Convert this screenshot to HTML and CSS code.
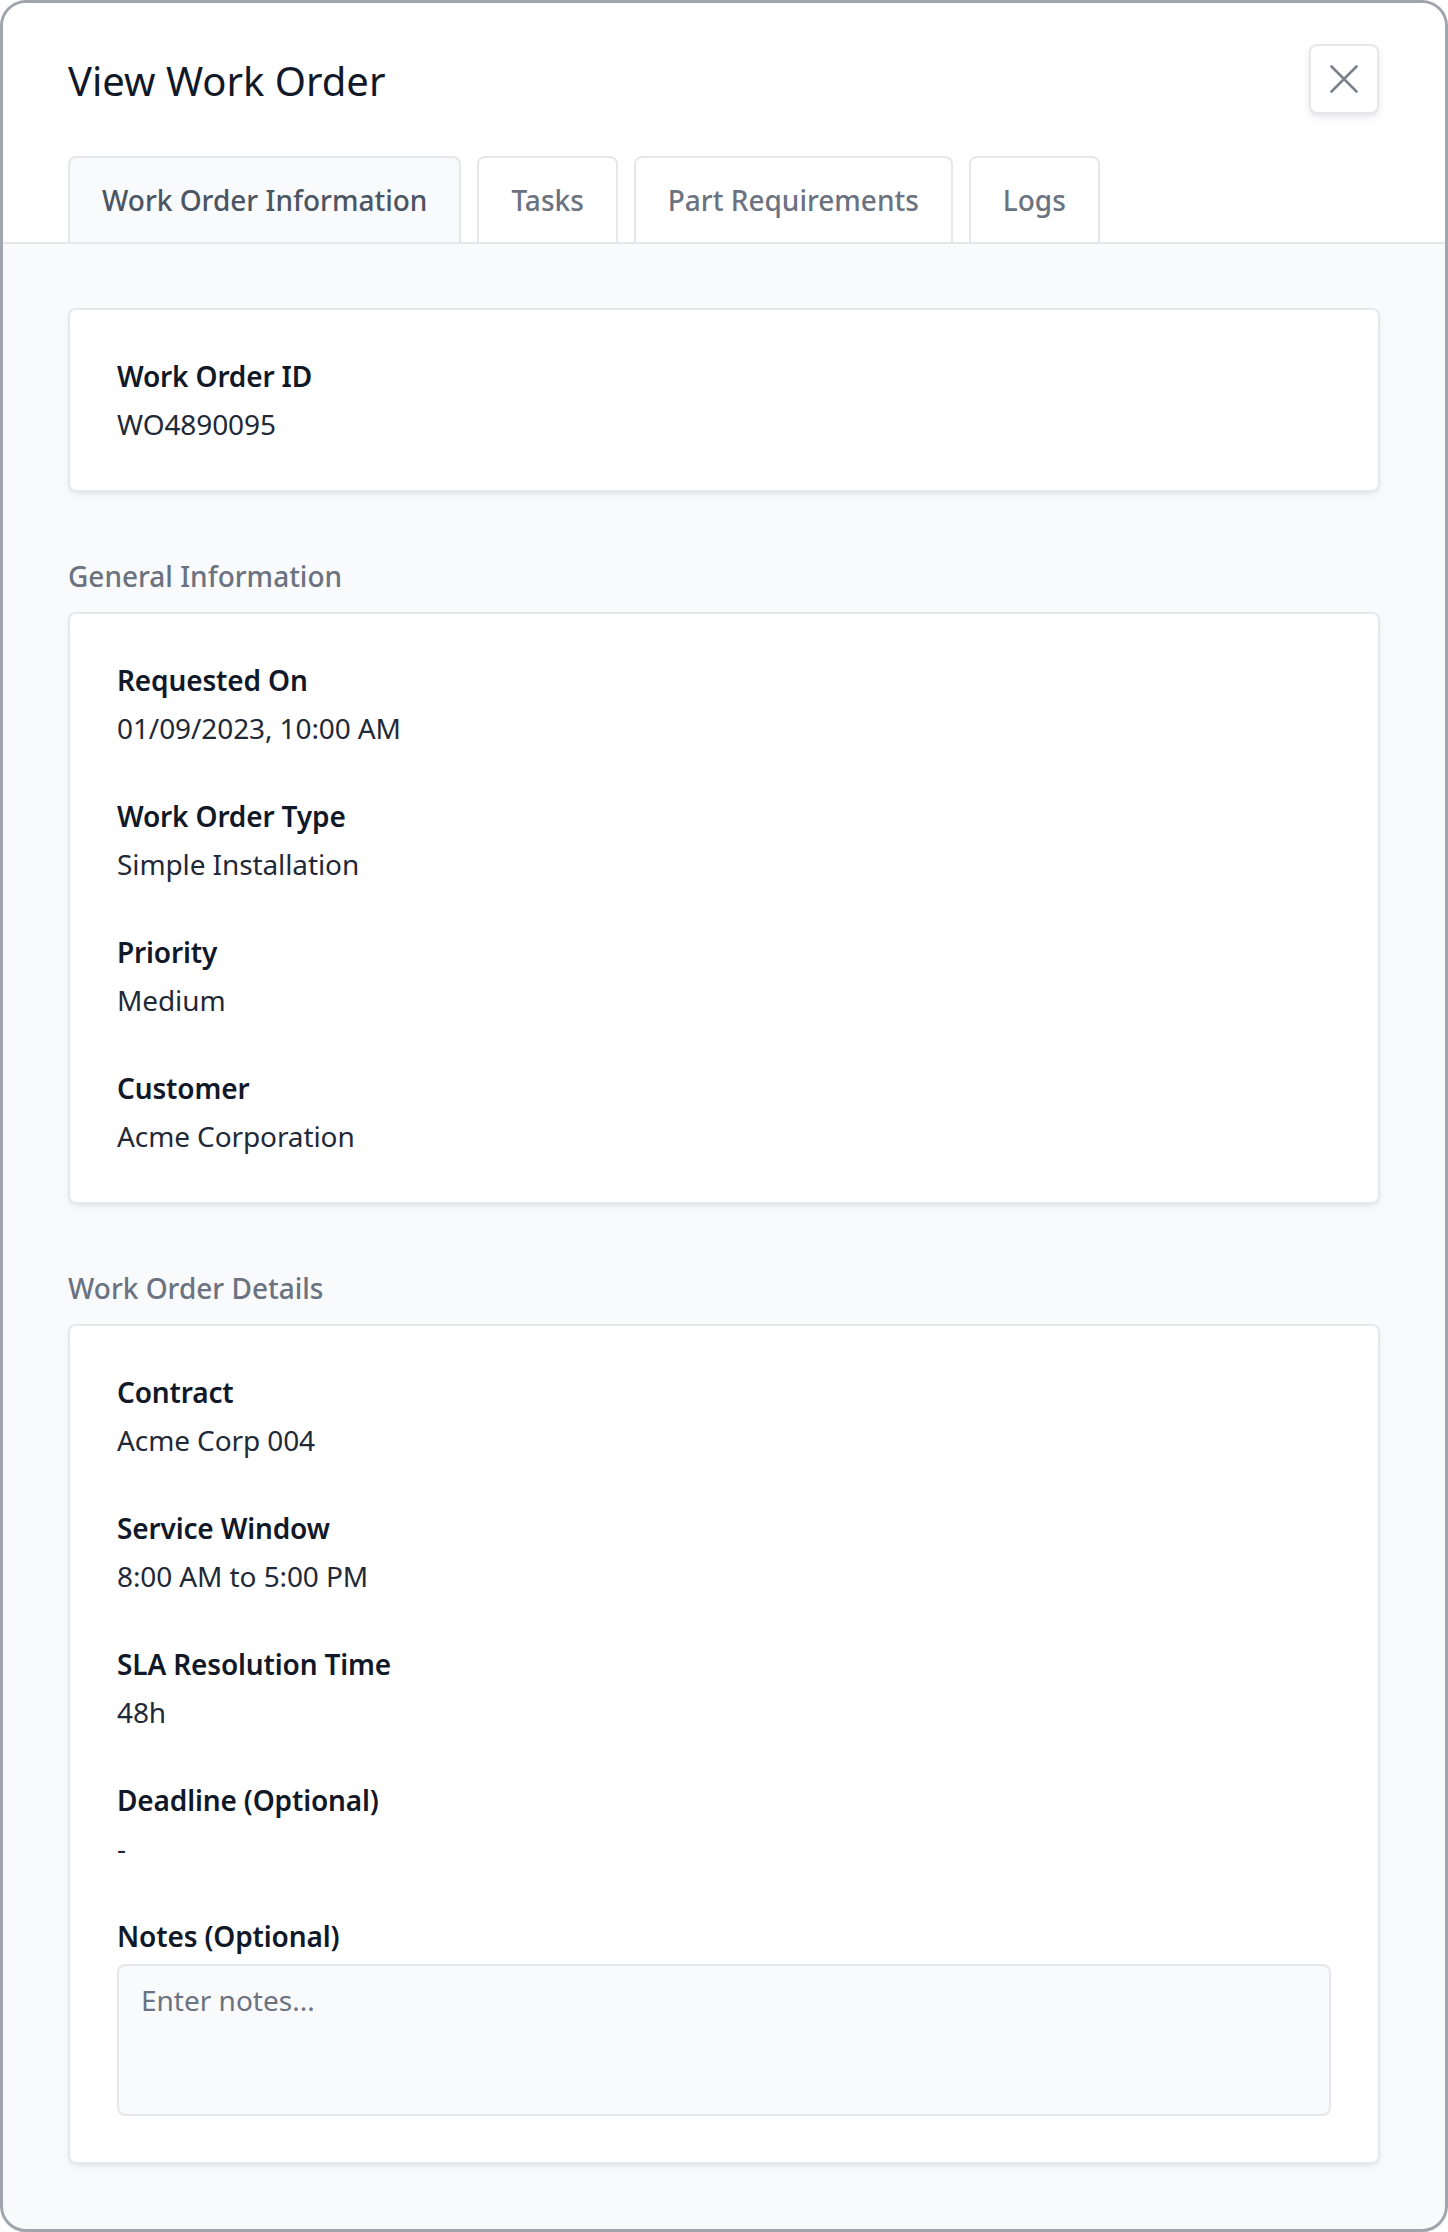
FILE: index.html
```html
<!DOCTYPE html>
<html lang="en">
<head>
<meta charset="utf-8">
<title>View Work Order</title>
<link rel="stylesheet" href="styles.css">
</head>
<body>
<div class="modal">
  <header class="modal-header">
    <div class="title-row">
      <h1 class="title">View Work Order</h1>
      <button class="close-btn" aria-label="Close">
        <svg width="28" height="28" viewBox="0 0 28 28" fill="none" stroke="currentColor" stroke-width="2.6" stroke-linecap="round">
          <path d="M1.5 1.5 L26.5 26.5 M26.5 1.5 L1.5 26.5"/>
        </svg>
      </button>
    </div>
    <nav class="tabs">
      <div class="tab active">Work Order Information</div>
      <div class="tab">Tasks</div>
      <div class="tab">Part Requirements</div>
      <div class="tab">Logs</div>
    </nav>
  </header>
  <main class="content">
    <section class="card">
      <div class="field">
        <div class="label">Work Order ID</div>
        <div class="value">WO4890095</div>
      </div>
    </section>

    <section class="group">
      <h2 class="group-title">General Information</h2>
      <div class="card">
        <div class="field">
          <div class="label">Requested On</div>
          <div class="value">01/09/2023, 10:00 AM</div>
        </div>
        <div class="field">
          <div class="label">Work Order Type</div>
          <div class="value">Simple Installation</div>
        </div>
        <div class="field">
          <div class="label">Priority</div>
          <div class="value">Medium</div>
        </div>
        <div class="field">
          <div class="label">Customer</div>
          <div class="value">Acme Corporation</div>
        </div>
      </div>
    </section>

    <section class="group">
      <h2 class="group-title">Work Order Details</h2>
      <div class="card">
        <div class="field">
          <div class="label">Contract</div>
          <div class="value">Acme Corp 004</div>
        </div>
        <div class="field">
          <div class="label">Service Window</div>
          <div class="value">8:00 AM to 5:00 PM</div>
        </div>
        <div class="field">
          <div class="label">SLA Resolution Time</div>
          <div class="value">48h</div>
        </div>
        <div class="field">
          <div class="label">Deadline (Optional)</div>
          <div class="value">-</div>
        </div>
        <div class="field">
          <div class="label">Notes (Optional)</div>
          <textarea class="notes" placeholder="Enter notes..."></textarea>
        </div>
      </div>
    </section>
  </main>
</div>
</body>
</html>
```

FILE: styles.css
```css
* {
  box-sizing: border-box;
}

html, body {
  margin: 0;
  padding: 0;
  background: #ffffff;
}

body {
  font-family: "Noto Sans", "Open Sans", sans-serif;
  color: #111827;
}

.modal {
  width: 1448px;
  height: 2232px;
  border: 3px solid #a1a6ae;
  border-radius: 26px;
  overflow: hidden;
  background: #f9fafb;
  display: flex;
  flex-direction: column;
}

.modal-header {
  background: #ffffff;
  padding: 41px 65px 0;
  border-bottom: 2px solid #e5e7eb;
}

.title-row {
  display: flex;
  align-items: center;
  justify-content: space-between;
  height: 70px;
}

.title {
  margin: 4px 0 0;
  font-size: 40px;
  line-height: 56px;
  font-weight: 400;
  color: #111827;
}

.close-btn {
  width: 70px;
  height: 70px;
  margin-right: 1px;
  display: flex;
  align-items: center;
  justify-content: center;
  background: #ffffff;
  border: 2px solid #e5e7eb;
  border-radius: 8px;
  color: #7b8089;
  box-shadow: 0 4px 8px rgba(0, 0, 0, 0.08), 0 1px 3px rgba(0, 0, 0, 0.05);
  padding: 0;
}

.tabs {
  display: flex;
  gap: 16px;
  margin-top: 42px;
}

.tab {
  padding: 22px 32px;
  font-size: 28px;
  line-height: 40px;
  font-weight: 500;
  color: #6b7280;
  background: #ffffff;
  border: 2px solid #e5e7eb;
  border-bottom: none;
  border-radius: 8px 8px 0 0;
}

.tab.active {
  background: #f9fafb;
  color: #4b5563;
}

.content {
  flex: 1;
  padding: 64px 65px 60px;
  display: flex;
  flex-direction: column;
  gap: 64px;
}

.card {
  background: #ffffff;
  border: 2px solid #e7e8eb;
  border-radius: 8px;
  padding: 46px 47px;
  display: flex;
  flex-direction: column;
  gap: 48px;
  box-shadow: 0 4px 8px -2px rgba(0, 0, 0, 0.08), 0 2px 4px -1px rgba(0, 0, 0, 0.04);
}

.group-title {
  margin: 0 0 16px;
  font-size: 28px;
  line-height: 40px;
  font-weight: 500;
  color: #6b7280;
}

.field {
  display: flex;
  flex-direction: column;
  gap: 8px;
}

.label {
  font-size: 28px;
  line-height: 40px;
  font-weight: 600;
  letter-spacing: -0.15px;
  color: #111827;
}

.value {
  font-size: 28px;
  line-height: 40px;
  font-weight: 400;
  letter-spacing: -0.1px;
  color: #1f2937;
}

.notes {
  display: block;
  width: 100%;
  height: 152px;
  resize: none;
  font-family: "Noto Sans", "Open Sans", sans-serif;
  font-size: 28px;
  line-height: 40px;
  padding: 14px 22px;
  background: #f9fafb;
  border: 2px solid #e5e7eb;
  border-radius: 8px;
  color: #1f2937;
  outline: none;
}

.notes::placeholder {
  color: #6b7280;
}
```
